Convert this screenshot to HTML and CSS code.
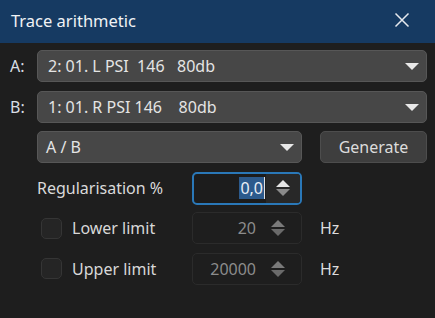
FILE: index.html
```html
<!DOCTYPE html>
<html>
<head>
  <meta charset="UTF-8">
  <title>Trace arithmetic</title>
  <link rel="stylesheet" href="styles.css">
</head>
<body>
  <div class="titlebar">
    <div class="title">Trace arithmetic</div>
    <svg class="close" width="16" height="16" viewBox="0 0 16 16">
      <path d="M1.5 1.5 L14.5 14.5 M14.5 1.5 L1.5 14.5" stroke="#e6e9ee" stroke-width="1.5" fill="none"/>
    </svg>
  </div>

  <div class="content">
    <div class="row">
      <div class="label">A:</div>
      <div class="combo wide">
        <span class="combo-text">2: 01. L PSI&nbsp; 146&nbsp;&nbsp; 80db</span>
        <span class="arrow"></span>
      </div>
    </div>

    <div class="row">
      <div class="label">B:</div>
      <div class="combo wide">
        <span class="combo-text">1: 01. R PSI 146&nbsp;&nbsp;&nbsp; 80db</span>
        <span class="arrow"></span>
      </div>
    </div>

    <div class="row indent">
      <div class="combo op">
        <span class="combo-text">A / B</span>
        <span class="arrow"></span>
      </div>
      <button class="button">Generate</button>
    </div>

    <div class="row indent">
      <div class="field-label">Regularisation %</div>
      <div class="spin focus">
        <div class="spin-value"><span class="selected">0,0</span><span class="caret"></span></div>
        <div class="spin-buttons">
          <span class="up"></span>
          <span class="down"></span>
        </div>
      </div>
    </div>

    <div class="row indent">
      <div class="check-label"><span class="checkbox"></span>Lower limit</div>
      <div class="spin disabled">
        <div class="spin-value">20</div>
        <div class="spin-buttons">
          <span class="up"></span>
          <span class="down"></span>
        </div>
      </div>
      <div class="unit">Hz</div>
    </div>

    <div class="row indent">
      <div class="check-label"><span class="checkbox"></span>Upper limit</div>
      <div class="spin disabled">
        <div class="spin-value">20000</div>
        <div class="spin-buttons">
          <span class="up"></span>
          <span class="down"></span>
        </div>
      </div>
      <div class="unit">Hz</div>
    </div>
  </div>
</body>
</html>
```

FILE: styles.css
```css
body {
  margin: 0;
  background-color: #1e1e1e;
  color: #e2e2e2;
  font-family: 'Noto Sans', 'Open Sans', sans-serif;
  font-size: 16px;
  height: 318px;
  overflow: hidden;
}

.titlebar {
  height: 43px;
  background-color: #163a62;
  display: flex;
  align-items: center;
  justify-content: space-between;
  padding: 0 25px 0 11px;
}

.title {
  color: #f0f2f5;
  font-size: 16.5px;
  margin-top: -2px;
}

.close {
  margin-top: -4px;
}

.content {
  display: flex;
  flex-direction: column;
  gap: 8.6px;
  padding: 7px 8px 0 10px;
}

.row {
  display: flex;
  align-items: center;
  height: 32px;
}

.indent {
  padding-left: 27px;
}

.label {
  width: 27px;
  color: #d8dde4;
}

.combo {
  box-sizing: border-box;
  height: 32px;
  background-color: #474747;
  border: 1px solid #575757;
  border-radius: 5px;
  display: flex;
  align-items: center;
  justify-content: space-between;
  padding: 0 7px 0 10px;
  color: #e4e4e4;
}

.wide {
  flex: 1;
}

.op {
  width: 265px;
  padding-left: 8px;
}

.arrow {
  width: 0;
  height: 0;
  border-left: 7px solid transparent;
  border-right: 7px solid transparent;
  border-top: 7px solid #e8e8e8;
  margin-top: 1px;
}

.button {
  box-sizing: border-box;
  margin-left: 18px;
  width: 107px;
  height: 32px;
  background-color: #3e3e3e;
  border: 1px solid #4d4d4d;
  border-radius: 5px;
  color: #dcdcdc;
  font-family: inherit;
  font-size: 16px;
}

.field-label {
  width: 155px;
  color: #dadada;
}

.check-label {
  width: 155px;
  display: flex;
  align-items: center;
  color: #d8d8d8;
}

.checkbox {
  box-sizing: border-box;
  width: 21px;
  height: 21px;
  margin: 0 10px 0 4px;
  border: 1px solid #353535;
  border-radius: 5px;
  background-color: #252525;
}

.spin {
  box-sizing: border-box;
  width: 110px;
  height: 32px;
  border-radius: 5px;
  display: flex;
  align-items: stretch;
  overflow: hidden;
}

.spin.focus {
  border: 2px solid #2a78b8;
  background-color: #1c1c1c;
  height: 33px;
  margin-top: 1px;
}

.spin.disabled {
  border: 1px solid #2b2b2b;
  background-color: #1e1e1e;
  color: #8c8c8c;
}

.spin-value {
  flex: 1;
  display: flex;
  align-items: center;
  justify-content: flex-end;
  padding-right: 8px;
}

.spin.focus .spin-value {
  padding-right: 1px;
}

.selected {
  background-color: #2c5a8c;
  color: #e8eef6;
  line-height: 22px;
  padding: 0 1px;
}

.caret {
  width: 1px;
  height: 22px;
  background-color: #e0e0e0;
}

.spin-buttons {
  width: 28px;
  display: flex;
  flex-direction: column;
  align-items: center;
  justify-content: center;
  gap: 2px;
  padding-right: 9px;
}

.spin.focus .spin-buttons {
  background-color: #282828;
  padding-right: 0;
  width: 34px;
}

.up {
  width: 0;
  height: 0;
  border-left: 7px solid transparent;
  border-right: 7px solid transparent;
  border-bottom: 7px solid #7a7a7a;
}

.down {
  width: 0;
  height: 0;
  border-left: 7px solid transparent;
  border-right: 7px solid transparent;
  border-top: 7px solid #6a6a6a;
}

.spin.focus .up {
  border-bottom-color: #e6e6e6;
}

.spin.focus .down {
  border-top-color: #8a8a8a;
}

.unit {
  margin-left: 18px;
  color: #dcdcdc;
}
```
